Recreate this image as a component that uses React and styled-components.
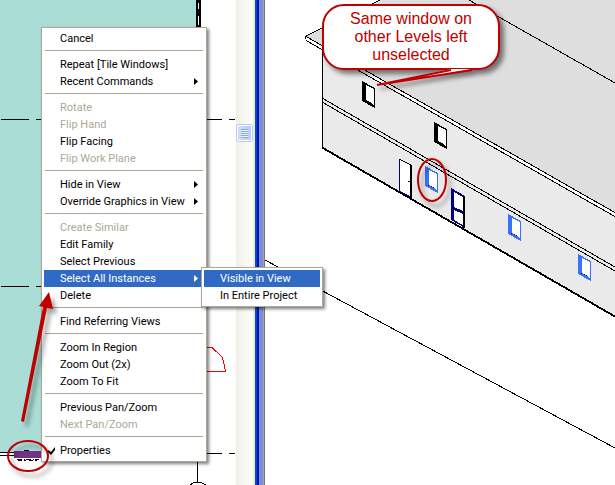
import React from 'react'
import styled, { createGlobalStyle } from 'styled-components'

const MENU = [
    [{ label: 'Cancel' }],
    [{ label: 'Repeat [Tile Windows]' }, { label: 'Recent Commands', arrow: true }],
    [
        { label: 'Rotate', disabled: true },
        { label: 'Flip Hand', disabled: true },
        { label: 'Flip Facing' },
        { label: 'Flip Work Plane', disabled: true },
    ],
    [{ label: 'Hide in View', arrow: true }, { label: 'Override Graphics in View', arrow: true }],
    [
        { label: 'Create Similar', disabled: true },
        { label: 'Edit Family' },
        { label: 'Select Previous' },
        {
            label: 'Select All Instances',
            arrow: true,
            active: true,
            children: [{ label: 'Visible in View', active: true }, { label: 'In Entire Project' }],
        },
        { label: 'Delete' },
    ],
    [{ label: 'Find Referring Views' }],
    [{ label: 'Zoom In Region' }, { label: 'Zoom Out (2x)' }, { label: 'Zoom To Fit' }],
    [{ label: 'Previous Pan/Zoom' }, { label: 'Next Pan/Zoom', disabled: true }],
    [{ label: 'Properties', checked: true }],
]

const MenuItem = ({ item }) => (
    <Item>
        <ItemButton type="button" disabled={item.disabled} $active={item.active}>
            <CheckSlot>
                {item.checked && (
                    <svg width="8" height="8" viewBox="0 0 8 8" aria-hidden="true">
                        <path d="M0 3v2l3 3 4-5V0L3 5z" fill="currentColor" />
                    </svg>
                )}
            </CheckSlot>
            <Label>{item.label}</Label>
            {item.arrow && (
                <svg width="4" height="7" viewBox="0 0 4 7" aria-hidden="true">
                    <path d="M0 0L4 3.5L0 7z" fill="currentColor" />
                </svg>
            )}
        </ItemButton>
        {item.children && (
            <SubMenu>
                {item.children.map((child) => <MenuItem key={child.label} item={child} />)}
            </SubMenu>
        )}
    </Item>
)

const ContextMenu = () => (
    <MainMenu>
        {MENU.map((group, i) => (
            <React.Fragment key={group[0].label}>
                {i > 0 && <Separator />}
                {group.map((item) => <MenuItem key={item.label} item={item} />)}
            </React.Fragment>
        ))}
    </MainMenu>
)

const PlanView = () => (
    <Drawing aria-label="Floor plan" shapeRendering="crispEdges">
        <rect width="196" height="452" fill="#aaddd6" />
        <rect x="196" width="2" height="452" fill="#000" />
        <path d="M198.5 0V452" stroke="#fff" />
        <path d="M198.5 0V452" stroke="#000" strokeDasharray="3 6 7 9" />
        <rect x="199" width="2" height="452" fill="#000" />
        <rect x="201" width="35" height="452" fill="#fff" />
        <path
            d="M1 119.5H29M36 119.5H60M200 119.5H222M229 119.5H235M1 286.5H29M36 286.5H60M200 286.5H222M229 286.5H235M200 453.5H222M229 453.5H235"
            stroke="#000"
            fill="none"
        />
        <path d="M0 452.5H60M0 455.5H60" stroke="#000" />
        <path d="M0 453.5H60" stroke="#fff" />
        <path d="M200 347.5H212L222.5 357.5L224.5 366L225.5 371.5H200" stroke="#f00" fill="none" />
        <path d="M197.5 455V482" stroke="#000" />
        <path d="M190 485L194 482.5H201L206 485" stroke="#000" fill="none" />
        <rect x="24" y="450" width="5" height="2" />
        <rect x="14" y="451" width="27" height="7" fill="#73318a" />
        <path d="M17 459.5H39" stroke="#000" strokeDasharray="5 2 1 1" />
        <path d="M18 460.5H38" stroke="#000" strokeDasharray="4 2 2 3" />
    </Drawing>
)

const WindowShape = ({ x, y, color }) => (
    <g transform={`translate(${x} ${y})`}>
        <path d="M0 0L13 7V27L0 20z" fill={color} />
        <path d="M4 4L12 8V24L4 19z" fill="#fff" />
        <path d="M3 19L11 23" stroke="#112" strokeDasharray="1 2" />
    </g>
)

const ModelView = () => (
    <Drawing aria-label="3D view" shapeRendering="crispEdges">
        {/* coordinates run across the whole workspace, the pane starts at 265 */}
        <g transform="translate(-265 0)">
            <path d="M306 36L380 0H2000V1004L306 40z" fill="#dedede" />
            <path d="M322 46L2000 1003V1116L322 147z" fill="#eaeaea" />
            <path d="M306 36L2000 1002V1006L306 40z" fill="#fff" />
            <g stroke="#000" fill="none">
                <path d="M306 36L380 0M469 0L2000 870" />
                <path d="M305.5 36V39M306 36.5L2000 1002M306 40.5L2000 1006" />
                <path d="M322 98L2000 1066M322 102L2000 1070" />
                <path d="M322.5 48V147" />
                <path d="M322 147L2000 1115" />
                <path d="M322 148L2000 1116" />
                <path d="M265 260L2000 1192" />
            </g>
            <path d="M399 159L412 165V198L399 191z" fill="#fff" />
            <path d="M399.5 159V191L412 198" stroke="#000080" fill="none" />
            <path d="M399 159L411 165V198M408 181H411" stroke="#000" fill="none" />
            <path d="M411 165V198" stroke="#000" strokeWidth="2" />
            <path d="M451 188L465 196V228L451 220z" fill="#000080" />
            <path d="M454 192L463 197V211L454 207z" fill="#fff" />
            <path d="M454 210L463 214V225L454 220z" fill="#fff" />
            <path d="M464 196V228" stroke="#000" strokeWidth="2" />
            <WindowShape x={362} y={81} color="#000" />
            <WindowShape x={434} y={122} color="#000" />
            <WindowShape x={425} y={166} color="#3873ff" />
            <WindowShape x={508} y={214} color="#3873ff" />
            <WindowShape x={578} y={254} color="#3873ff" />
        </g>
    </Drawing>
)

const Annotations = () => (
    <Overlay aria-hidden="true">
        <g fill="none" stroke="#c00000" strokeWidth="2">
            <ellipse cx="432" cy="180" rx="14" ry="21" />
            <ellipse cx="28" cy="456" rx="20" ry="15" />
        </g>
        <path d="M21 421L43 307L39 306L49 292L53 309L47 308L24 422z" fill="#c00000" />
    </Overlay>
)

const App = () => {
    return (
        <Workspace>
            <GlobalStyle />
            <PlanPane>
                <PlanView />
            </PlanPane>
            <ScrollTrack>
                <ScrollThumb type="button" aria-label="Scroll">
                    <Grip />
                </ScrollThumb>
            </ScrollTrack>
            <WindowEdge />
            <ModelPane>
                <ModelView />
            </ModelPane>
            <Callout>
                <CalloutText>Same window on other Levels left unselected</CalloutText>
                <Tail width="100" height="22" viewBox="0 0 100 22" aria-hidden="true">
                    <path d="M75 2L1 18L96 2z" fill="#fff" />
                    <path d="M75 3L1 18L96 3" fill="none" stroke="#c00000" strokeWidth="2" />
                </Tail>
            </Callout>
            <ContextMenu />
            <Annotations />
        </Workspace>
    )
}

const GlobalStyle = createGlobalStyle`
  * {
    box-sizing: border-box;
  }
  body {
    margin: 0;
    background: white;
    font-family: Tahoma, Roboto, sans-serif;
    font-size: 11px;
  }
`

const Workspace = styled.main`
  position: relative;
  display: grid;
  grid-template-columns: 236px 19px 10px 1fr;
  height: 100vh;
  min-height: 485px;
  overflow: hidden;
`

const PlanPane = styled.section`
  overflow: hidden;
`

const ModelPane = styled.section`
  overflow: hidden;
`

const Drawing = styled.svg`
  display: block;
  width: 100%;
  height: 100%;
`

const ScrollTrack = styled.div`
  padding: 125px 2px 0 1px;
  border-right: 2px solid #eeede5;
  background: linear-gradient(to right, #f0f0e9, #fefffa);
`

const ScrollThumb = styled.button`
  display: flex;
  align-items: center;
  justify-content: center;
  width: 15px;
  height: 16px;
  padding: 0;
  border: 1px solid white;
  border-radius: 2px;
  background: linear-gradient(to right, #d0dffd, #b5cbfb);
  box-shadow: 0 0 0 1px #b6cbf2;
`

const Grip = styled.span`
  width: 7px;
  height: 9px;
  background: repeating-linear-gradient(#87a5ea 0 1px, #eef4fe 1px 2px);
`

const WindowEdge = styled.div`
  border-left: 2px solid #0046f0;
  border-right: 1px solid #77746a;
  background: linear-gradient(to right, #00159a 0 2px, #7b8ddf 2px 6px, #a6a6a0 6px);
`

const MenuPanel = styled.ul`
  position: absolute;
  margin: 0;
  padding: 2px;
  border: 1px solid #aca899;
  background: white;
  box-shadow: 2px 2px 3px rgba(0, 0, 0, 0.5);
  list-style: none;
`

const MainMenu = styled(MenuPanel)`
  top: 27px;
  left: 41px;
  width: 166px;
`

const SubMenu = styled(MenuPanel)`
  top: -3px;
  left: 157px;
  width: 122px;
  z-index: 1;
`

const Item = styled.li`
  position: relative;
`

const ItemButton = styled.button`
  display: flex;
  align-items: center;
  width: 100%;
  height: 17px;
  padding: 0 6px 0 0;
  border: none;
  background-color: ${({ $active }) => ($active ? '#316ac5' : 'transparent')};
  color: ${({ $active }) => ($active ? 'white' : 'black')};
  font: inherit;
  line-height: 17px;
  text-align: left;
  &:disabled {
    color: #aca899;
  }
`

const CheckSlot = styled.span`
  display: flex;
  width: 16px;
  padding-left: 4px;
`

const Label = styled.span`
  flex: 1;
  white-space: nowrap;
`

const Separator = styled.li`
  height: 1px;
  margin: 3px 1px 5px;
  background: #aca899;
`

const Callout = styled.aside`
  position: absolute;
  top: 4px;
  left: 322px;
  width: 178px;
  padding: 4px 26px;
  border: 2px solid #c00000;
  border-radius: 22px;
  background: white;
  box-shadow: 4px 4px 5px rgba(0, 0, 0, 0.5);
`

const CalloutText = styled.p`
  margin: 0;
  color: #c00000;
  font-family: Arial, "Liberation Sans", sans-serif;
  font-size: 16px;
  line-height: 18px;
  text-align: center;
`

const Tail = styled.svg`
  position: absolute;
  top: 61px;
  left: 52px;
  filter: drop-shadow(3px 4px 2px rgba(0, 0, 0, 0.4));
`

const Overlay = styled.svg`
  position: absolute;
  top: 0;
  left: 0;
  width: 100%;
  height: 100%;
  pointer-events: none;
  filter: drop-shadow(4px 5px 2px rgba(0, 0, 0, 0.35));
`

export default App
